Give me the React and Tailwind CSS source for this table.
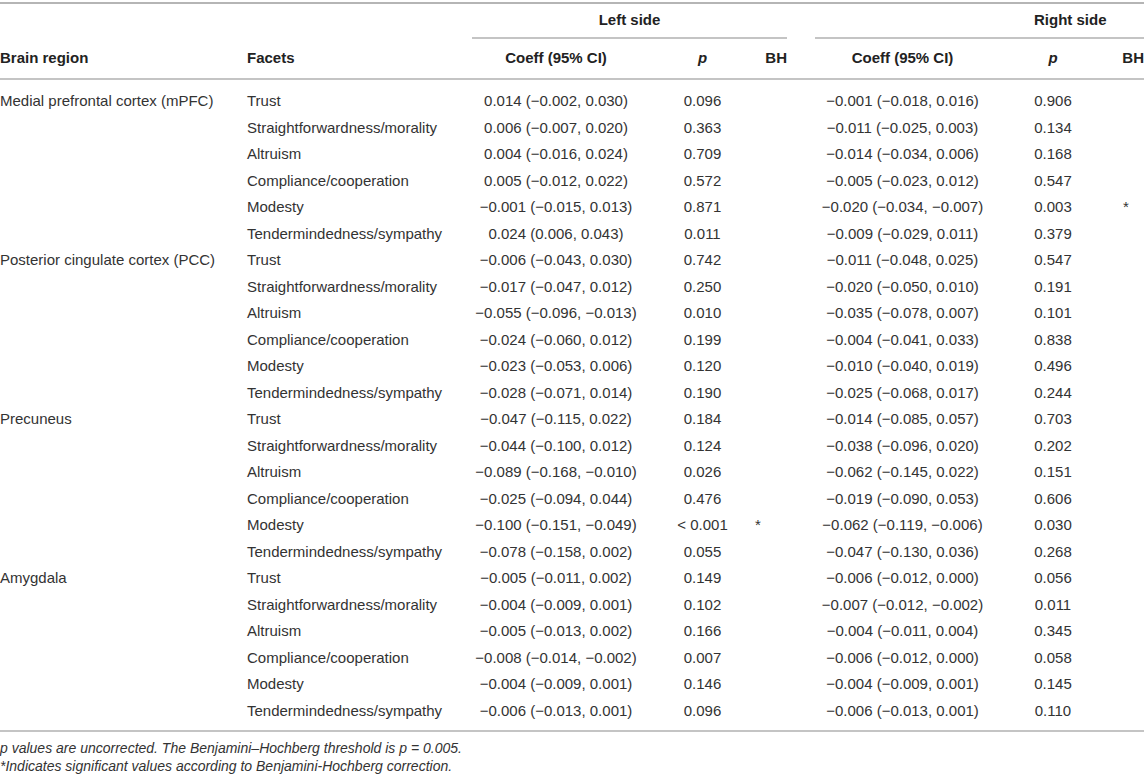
import React from "react";

const rows = [
  ["Medial prefrontal cortex (mPFC)", "Trust", "0.014 (−0.002, 0.030)", "0.096", "", "−0.001 (−0.018, 0.016)", "0.906", ""],
  ["", "Straightforwardness/morality", "0.006 (−0.007, 0.020)", "0.363", "", "−0.011 (−0.025, 0.003)", "0.134", ""],
  ["", "Altruism", "0.004 (−0.016, 0.024)", "0.709", "", "−0.014 (−0.034, 0.006)", "0.168", ""],
  ["", "Compliance/cooperation", "0.005 (−0.012, 0.022)", "0.572", "", "−0.005 (−0.023, 0.012)", "0.547", ""],
  ["", "Modesty", "−0.001 (−0.015, 0.013)", "0.871", "", "−0.020 (−0.034, −0.007)", "0.003", "*"],
  ["", "Tendermindedness/sympathy", "0.024 (0.006, 0.043)", "0.011", "", "−0.009 (−0.029, 0.011)", "0.379", ""],
  ["Posterior cingulate cortex (PCC)", "Trust", "−0.006 (−0.043, 0.030)", "0.742", "", "−0.011 (−0.048, 0.025)", "0.547", ""],
  ["", "Straightforwardness/morality", "−0.017 (−0.047, 0.012)", "0.250", "", "−0.020 (−0.050, 0.010)", "0.191", ""],
  ["", "Altruism", "−0.055 (−0.096, −0.013)", "0.010", "", "−0.035 (−0.078, 0.007)", "0.101", ""],
  ["", "Compliance/cooperation", "−0.024 (−0.060, 0.012)", "0.199", "", "−0.004 (−0.041, 0.033)", "0.838", ""],
  ["", "Modesty", "−0.023 (−0.053, 0.006)", "0.120", "", "−0.010 (−0.040, 0.019)", "0.496", ""],
  ["", "Tendermindedness/sympathy", "−0.028 (−0.071, 0.014)", "0.190", "", "−0.025 (−0.068, 0.017)", "0.244", ""],
  ["Precuneus", "Trust", "−0.047 (−0.115, 0.022)", "0.184", "", "−0.014 (−0.085, 0.057)", "0.703", ""],
  ["", "Straightforwardness/morality", "−0.044 (−0.100, 0.012)", "0.124", "", "−0.038 (−0.096, 0.020)", "0.202", ""],
  ["", "Altruism", "−0.089 (−0.168, −0.010)", "0.026", "", "−0.062 (−0.145, 0.022)", "0.151", ""],
  ["", "Compliance/cooperation", "−0.025 (−0.094, 0.044)", "0.476", "", "−0.019 (−0.090, 0.053)", "0.606", ""],
  ["", "Modesty", "−0.100 (−0.151, −0.049)", "< 0.001", "*", "−0.062 (−0.119, −0.006)", "0.030", ""],
  ["", "Tendermindedness/sympathy", "−0.078 (−0.158, 0.002)", "0.055", "", "−0.047 (−0.130, 0.036)", "0.268", ""],
  ["Amygdala", "Trust", "−0.005 (−0.011, 0.002)", "0.149", "", "−0.006 (−0.012, 0.000)", "0.056", ""],
  ["", "Straightforwardness/morality", "−0.004 (−0.009, 0.001)", "0.102", "", "−0.007 (−0.012, −0.002)", "0.011", ""],
  ["", "Altruism", "−0.005 (−0.013, 0.002)", "0.166", "", "−0.004 (−0.011, 0.004)", "0.345", ""],
  ["", "Compliance/cooperation", "−0.008 (−0.014, −0.002)", "0.007", "", "−0.006 (−0.012, 0.000)", "0.058", ""],
  ["", "Modesty", "−0.004 (−0.009, 0.001)", "0.146", "", "−0.004 (−0.009, 0.001)", "0.145", ""],
  ["", "Tendermindedness/sympathy", "−0.006 (−0.013, 0.001)", "0.096", "", "−0.006 (−0.013, 0.001)", "0.110", ""],
];

// column template shared by every row
const cols = "grid grid-cols-[247px_225px_168px_125px_22px_28px_175px_126px_28px]";

export default function App() {
  return (
    <div className="w-[1144px] bg-white text-[15px] text-[#333] font-['Liberation_Sans',Arial,sans-serif]">
      <div className="mt-[2px] border-t-2 border-[#b5b5b5]" />

      {/* side headers */}
      <div className={`${cols} h-[35px] font-bold text-[#222]`}>
        <div className="col-span-2" />
        <div className="col-span-3 flex items-center justify-center border-b-2 border-[#c4c4c4]">Left side</div>
        <div />
        <div className="col-span-3 flex items-center pl-[219px] border-b-2 border-[#c4c4c4]">Right side</div>
      </div>

      {/* column headers */}
      <div className={`${cols} h-[41px] items-center font-bold text-[#222] border-b-2 border-[#c4c4c4]`}>
        <div>Brain region</div>
        <div>Facets</div>
        <div className="text-center">Coeff (95% CI)</div>
        <div className="text-center italic">p</div>
        <div className="text-right">BH</div>
        <div />
        <div className="text-center">Coeff (95% CI)</div>
        <div className="text-center italic">p</div>
        <div className="text-right">BH</div>
      </div>

      <div className="pt-[8px] pb-[6px] border-b-2 border-[#c4c4c4]">
        {rows.map((r, i) => (
          <div key={i} className={`${cols} h-[26.5px] items-center whitespace-nowrap`}>
            <div>{r[0]}</div>
            <div>{r[1]}</div>
            <div className="text-center">{r[2]}</div>
            <div className="text-center">{r[3]}</div>
            <div className="text-left -ml-[10px]">{r[4]}</div>
            <div />
            <div className="text-center">{r[5]}</div>
            <div className="text-center">{r[6]}</div>
            <div className="text-left pl-[7px]">{r[7]}</div>
          </div>
        ))}
      </div>

      <div className="pt-[7px] italic leading-[18px] text-[14px]">
        <p>p values are uncorrected. The Benjamini–Hochberg threshold is p = 0.005.</p>
        <p>*Indicates significant values according to Benjamini-Hochberg correction.</p>
      </div>
    </div>
  );
}
